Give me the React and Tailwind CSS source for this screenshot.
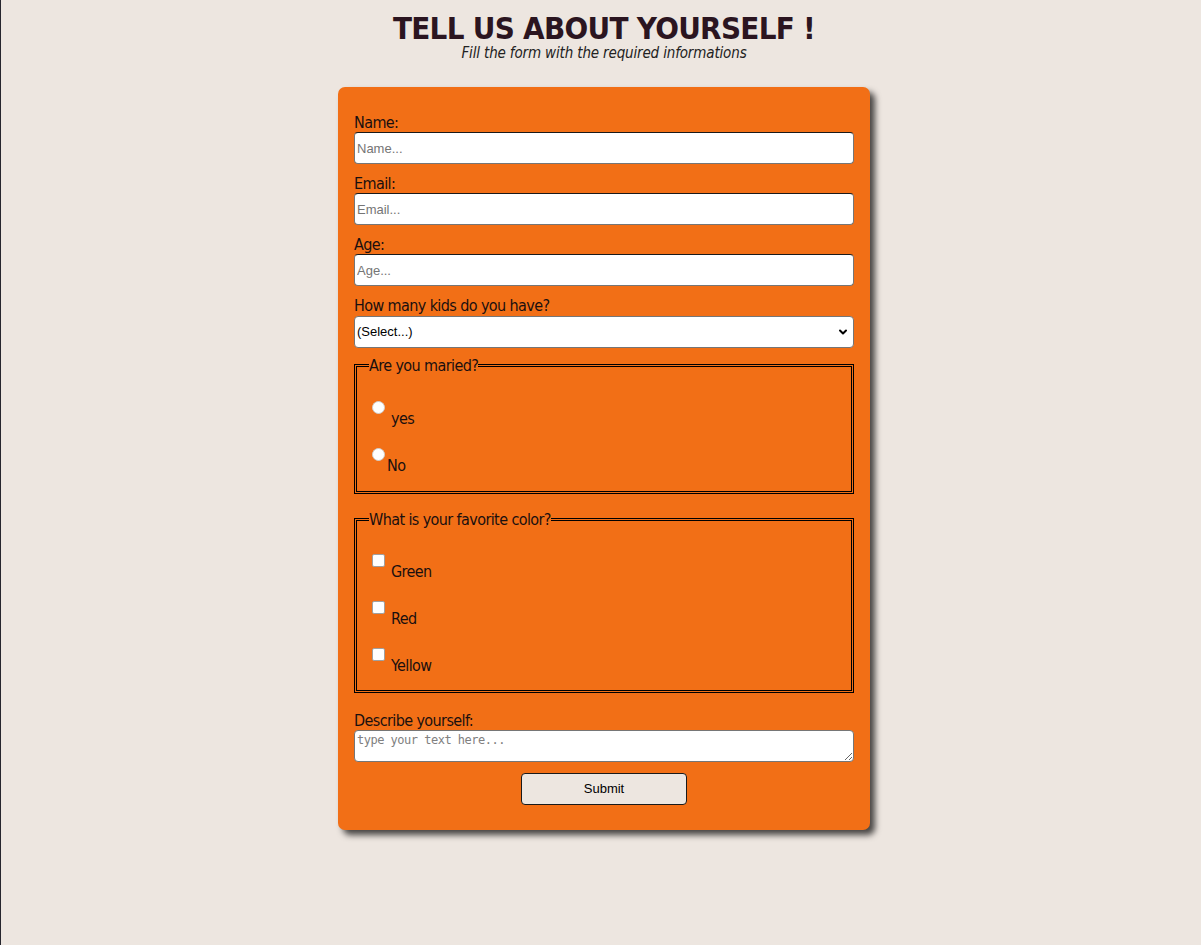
import { ChevronDown } from 'lucide-react';

const FieldInput = ({ label, placeholder, type = 'text' }) => (
  <div className="mb-[10px]">
    <label className="block text-[16px] leading-[19px]">{label}</label>
    <input
      type={type}
      placeholder={placeholder}
      className="block w-full h-[32px] px-[2px] bg-white rounded-[4px] border border-[#767676] border-t-[#1a1a1a] font-['Liberation_Sans',Arial,sans-serif] tracking-normal text-[13px] text-black placeholder:text-[#757575] outline-none"
    />
  </div>
);

const Option = ({ type, name, label, gap }) => (
  <label className="flex items-start">
    <input
      type={type}
      name={name}
      className={`m-0 ml-[3px] w-[13px] h-[13px] shrink-0 bg-white ${type === 'radio' ? 'appearance-none rounded-full border border-[#cfcfcf]' : 'appearance-none rounded-[2px] border border-[#a0a0a0]'}`}
    />
    <span className={`mt-[8px] text-[16px] leading-[19px] ${gap}`}>{label}</span>
  </label>
);

export default function App() {
  return (
    <div className="min-h-[945px] bg-[#ede6e0] border-l border-[#26262e] pl-[6px] text-[#1a0f0f] font-['DejaVu_Sans_Condensed','DejaVu_Sans',Verdana,sans-serif] tracking-[-0.6px]">
      {/* Header */}
      <header className="pt-[11px] text-center">
        <h1 className="text-[31px] font-bold leading-[34px] tracking-[-0.7px] text-[#2b1520]">TELL US ABOUT YOURSELF !</h1>
        <p className="italic text-[15px] leading-[17px] tracking-[-0.15px] text-[#222]">Fill the form with the required informations</p>
      </header>

      <form className="mx-auto mt-[25px] w-[532px] rounded-[7px] bg-[#f26f16] px-4 pt-[26px] pb-[25px] shadow-[5px_5px_6px_rgba(0,0,0,0.7)]">
        <FieldInput label="Name:" placeholder="Name..." />
        <FieldInput label="Email:" placeholder="Email..." type="email" />
        <FieldInput label="Age:" placeholder="Age..." />

        <div className="mb-[8px]">
          <label className="block text-[16px] leading-[20px]">How many kids do you have?</label>
          <div className="relative">
            <select className="block w-full h-[32px] px-[2px] appearance-none bg-white rounded-[4px] border border-[#767676] font-['Liberation_Sans',Arial,sans-serif] tracking-normal text-[13px] text-black outline-none">
              <option>(Select...)</option>
              <option>0</option>
              <option>1</option>
              <option>2</option>
              <option>3+</option>
            </select>
            <ChevronDown className="absolute right-[5px] top-[10px] w-[12px] h-[12px] pointer-events-none text-black" strokeWidth={4} />
          </div>
        </div>

        {/* Marital status */}
        <fieldset className="mb-[16px] border-[3px] border-double border-black px-3 pt-[26px] pb-[16px]">
          <legend className="p-0 text-[16px] leading-[19px]">Are you maried?</legend>
          <div className="flex flex-col gap-[20px]">
            <Option type="radio" name="married" label="yes" gap="ml-[6px]" />
            <Option type="radio" name="married" label="No" gap="ml-[2px]" />
          </div>
        </fieldset>

        {/* Favorite color */}
        <fieldset className="mb-[18px] border-[3px] border-double border-black px-3 pt-[25px] pb-[15px]">
          <legend className="p-0 text-[16px] leading-[19px]">What is your favorite color?</legend>
          <div className="flex flex-col gap-[20px]">
            <Option type="checkbox" name="green" label="Green" gap="ml-[6px]" />
            <Option type="checkbox" name="red" label="Red" gap="ml-[6px]" />
            <Option type="checkbox" name="yellow" label="Yellow" gap="ml-[6px]" />
          </div>
        </fieldset>

        <div className="mb-[11px]">
          <label className="block text-[16px] leading-[19px]">Describe yourself:</label>
          <textarea
            placeholder="type your text here..."
            className="block w-full h-[32px] px-[2px] py-[2px] bg-white rounded-[4px] border border-[#767676] font-['DejaVu_Sans_Mono',monospace] tracking-[-0.5px] text-[12px] leading-[15px] placeholder:text-[#808080] outline-none"
          />
        </div>

        <div className="flex justify-center">
          <button
            type="button"
            className="w-[166px] h-[32px] rounded-[4px] border border-[#1a1a1a] bg-[#ede6e0] font-['Liberation_Sans',Arial,sans-serif] tracking-normal text-[13px] text-black"
          >
            Submit
          </button>
        </div>
      </form>
    </div>
  );
}
